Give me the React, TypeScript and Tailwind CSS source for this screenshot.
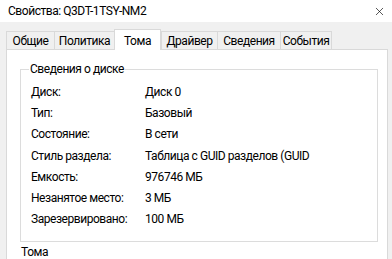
import { X } from 'lucide-react'

const tabs: [string, string][] = [
  ['Общие', 'w-[49px]'],
  ['Политика', 'w-[61px]'],
  ['Тома', 'w-[47px]'],
  ['Драйвер', 'w-[57px]'],
  ['Сведения', 'w-[64px]'],
  ['События', 'w-[52px]'],
]

const rows: [string, string][] = [
  ['Диск:', 'Диск 0'],
  ['Тип:', 'Базовый'],
  ['Состояние:', 'В сети'],
  ['Стиль раздела:', 'Таблица с GUID разделов (GUID'],
  ['Емкость:', '976746 МБ'],
  ['Незанятое место:', '3 МБ'],
  ['Зарезервировано:', '100 МБ'],
]

export default function App() {
  return (
    <div className="w-[392px] h-[259px] overflow-hidden bg-[#f0f0f0] text-[12px] tracking-[-0.45px] text-black font-['Roboto',sans-serif]">
      {/* title bar */}
      <div className="h-[22px] bg-white flex items-center justify-between pl-[8px] pr-[6px]">
        <span className="leading-none">Свойства: Q3DT-1TSY-NM2</span>
        <X className="w-[13px] h-[13px]" strokeWidth={1.2} />
      </div>

      {/* tabs */}
      <div className="pl-[6px] pr-[4px] pt-[7px]">
        <div className="flex items-end h-[20px]">
          {tabs.map(([t, w], i) =>
            t === 'Тома' ? (
              <div
                key={t}
                className={`${w} relative z-10 -ml-[1px] h-[21px] -mb-[1px] bg-white border border-b-0 border-[#d9d9d9] flex justify-center pt-[2px]`}
              >
                {t}
              </div>
            ) : (
              <div
                key={t}
                className={`${w} h-[18px] bg-[#f0f0f0] border border-b-0 border-[#d9d9d9] flex items-center justify-center ${i > 0 && tabs[i - 1][0] !== 'Тома' ? '-ml-[1px]' : ''}`}
              >
                {t}
              </div>
            )
          )}
        </div>

        {/* panel */}
        <div className="bg-white border border-[#d9d9d9] h-[230px] pl-[13px] pr-[9px] pt-[13px]">
          <fieldset className="border border-[#dcdcdc] pl-[10px] pb-[11px] pt-[6px] min-w-0">
            <legend className="ml-[-2px] px-[1px] leading-none">Сведения о диске</legend>
            <div className="flex flex-col">
              {rows.map(([k, v]) => (
                <div key={k} className="flex h-[21.3px] items-center">
                  <span className="w-[114px] shrink-0">{k}</span>
                  <span className="whitespace-nowrap">{v}</span>
                </div>
              ))}
            </div>
          </fieldset>
          <div className="mt-[3px] ml-[1px] leading-[15px]">Тома</div>
        </div>
      </div>
    </div>
  )
}
